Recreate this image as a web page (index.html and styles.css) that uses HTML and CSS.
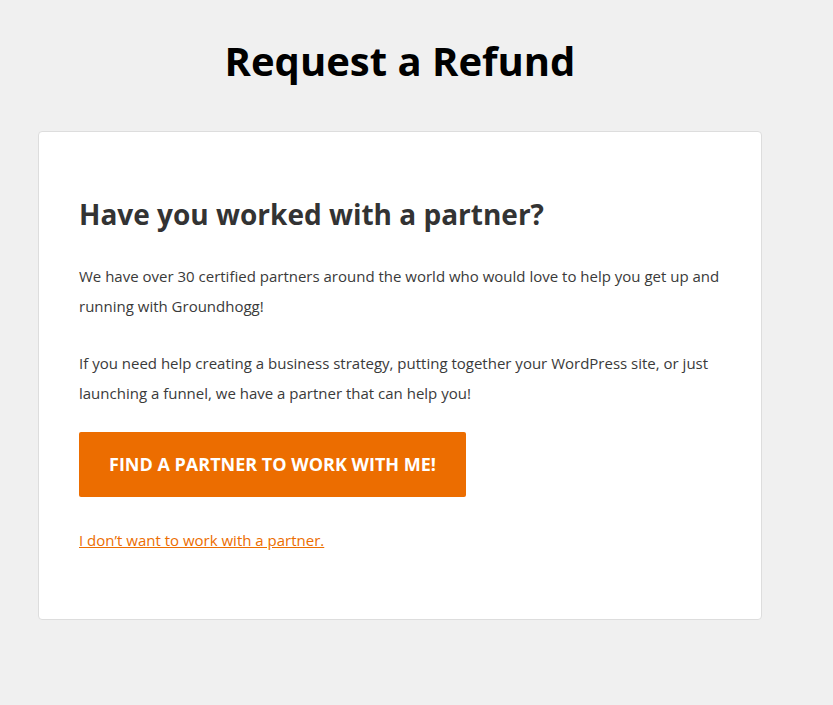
FILE: index.html
```html
<!DOCTYPE html>
<html lang="en">
<head>
<meta charset="utf-8">
<title>Request a Refund</title>
<link rel="stylesheet" href="styles.css">
</head>
<body>
<div class="wrap">
  <h1 class="title">Request a Refund</h1>
  <div class="card">
    <h2 class="card-title">Have you worked with a partner?</h2>
    <p class="text">We have over 30 certified partners around the world who would love to help you get up and running with Groundhogg!</p>
    <p class="text text-last">If you need help creating a business strategy, putting together your WordPress site, or just launching a funnel, we have a partner that can help you!</p>
    <a class="btn" href="#">FIND A PARTNER TO WORK WITH ME!</a>
    <p class="link-row"><a class="link" href="#">I don’t want to work with a partner.</a></p>
  </div>
</div>
</body>
</html>
```

FILE: styles.css
```css
html, body {
  margin: 0;
  padding: 0;
  background: #f0f0f0;
  font-family: "Open Sans", "Noto Sans", sans-serif;
}
.wrap {
  width: 724px;
  margin-left: 38px;
  padding-top: 34px;
}
.title {
  margin: 0 0 43px;
  text-align: center;
  font-size: 40px;
  line-height: 54px;
  font-weight: 700;
  color: #000;
}
.card {
  background: #fff;
  border: 1px solid #dddddd;
  border-radius: 4px;
  padding: 62px 40px 64px;
}
.card-title {
  margin: 0 0 27px;
  font-size: 28px;
  line-height: 40px;
  font-weight: 700;
  color: #333;
}
.text {
  margin: 0 0 27px;
  font-size: 15px;
  line-height: 30px;
  color: #3a3a3a;
}
.text-last {
  margin-bottom: 24px;
}
.btn {
  display: inline-block;
  background: #ec6d00;
  color: #fff;
  font-size: 18px;
  font-weight: 700;
  line-height: 65px;
  padding: 0 30px;
  border-radius: 2px;
  text-decoration: none;
}
.link-row {
  margin: 28px 0 0;
  font-size: 15px;
  line-height: 30px;
}
.link {
  color: #ec6d00;
  text-decoration: underline;
}
```
